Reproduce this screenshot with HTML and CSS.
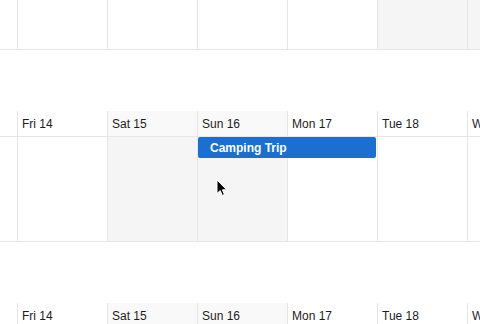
FILE: index.html
```html
<!DOCTYPE html>
<html>
<head>
<meta charset="utf-8">
<link rel="stylesheet" href="styles.css">
</head>
<body>
<div class="viewport">
  <div class="calendar">
    <section class="week">
      <div class="head">
        <div class="cell"></div>
        <div class="cell"></div>
        <div class="cell"></div>
        <div class="cell"></div>
        <div class="cell"></div>
        <div class="cell"></div>
        <div class="cell"></div>
      </div>
      <div class="body">
        <div class="day first"></div>
        <div class="day"></div>
        <div class="day"></div>
        <div class="day"></div>
        <div class="day"></div>
        <div class="day off"></div>
        <div class="day off"></div>
      </div>
    </section>
    <section class="week">
      <div class="head">
        <div class="cell first"></div>
        <div class="cell">Fri 14</div>
        <div class="cell wk">Sat 15</div>
        <div class="cell wk">Sun 16</div>
        <div class="cell">Mon 17</div>
        <div class="cell">Tue 18</div>
        <div class="cell">Wed 19</div>
      </div>
      <div class="body">
        <div class="day first"></div>
        <div class="day"></div>
        <div class="day off"></div>
        <div class="day off"></div>
        <div class="day"></div>
        <div class="day"></div>
        <div class="day"></div>
        <div class="event">Camping Trip</div>
      </div>
    </section>
    <section class="week">
      <div class="head">
        <div class="cell first"></div>
        <div class="cell">Fri 14</div>
        <div class="cell wk">Sat 15</div>
        <div class="cell wk">Sun 16</div>
        <div class="cell">Mon 17</div>
        <div class="cell">Tue 18</div>
        <div class="cell">Wed 19</div>
      </div>
      <div class="body">
        <div class="day first"></div>
        <div class="day"></div>
        <div class="day off"></div>
        <div class="day off"></div>
        <div class="day"></div>
        <div class="day"></div>
        <div class="day"></div>
      </div>
    </section>
  </div>
  <svg class="cursor" width="12" height="18" viewBox="0 0 12 18">
    <path d="M1 1 L1 14.5 L4.2 11.6 L6.3 16.4 L8.4 15.5 L6.4 10.8 L10.6 10.8 Z" fill="#000" stroke="#fff" stroke-width="1" stroke-linejoin="round"/>
  </svg>
</div>
</body>
</html>
```
FILE: styles.css
```css
html, body {
  margin: 0;
  padding: 0;
  background: #ffffff;
}
body {
  font-family: "Liberation Sans", Arial, sans-serif;
  font-size: 12px;
  color: #1d1d1f;
}
.viewport {
  position: relative;
  width: 480px;
  height: 324px;
  overflow: hidden;
}
.calendar {
  margin-top: -81px;
  width: 557px;
  display: flex;
  flex-direction: column;
}
.week {
  display: flex;
  flex-direction: column;
  margin-bottom: 61px;
}
.head, .body {
  display: grid;
  grid-template-columns: 17px repeat(6, 90px);
  border-bottom: 1px solid #e6e6e6;
}
.head {
  height: 25px;
}
.head .cell {
  border-left: 1px solid #e6e6e6;
  display: flex;
  align-items: center;
  padding-left: 4px;
  white-space: nowrap;
}
.head .cell:first-child {
  border-left: none;
}
.head .cell.wk {
  background: #f9f9f9;
}
.body {
  position: relative;
  height: 104px;
}
.day {
  border-left: 1px solid #e6e6e6;
}
.day.first {
  border-left: none;
}
.day.off {
  background: #f5f5f5;
}
.event {
  position: absolute;
  left: 198px;
  top: 0;
  width: 178px;
  height: 21px;
  box-sizing: border-box;
  padding-left: 12px;
  display: flex;
  align-items: center;
  background: #1a6fd1;
  border-radius: 2px;
  color: #ffffff;
  font-weight: bold;
  font-size: 12px;
}
.cursor {
  position: absolute;
  left: 216px;
  top: 179px;
}
```
